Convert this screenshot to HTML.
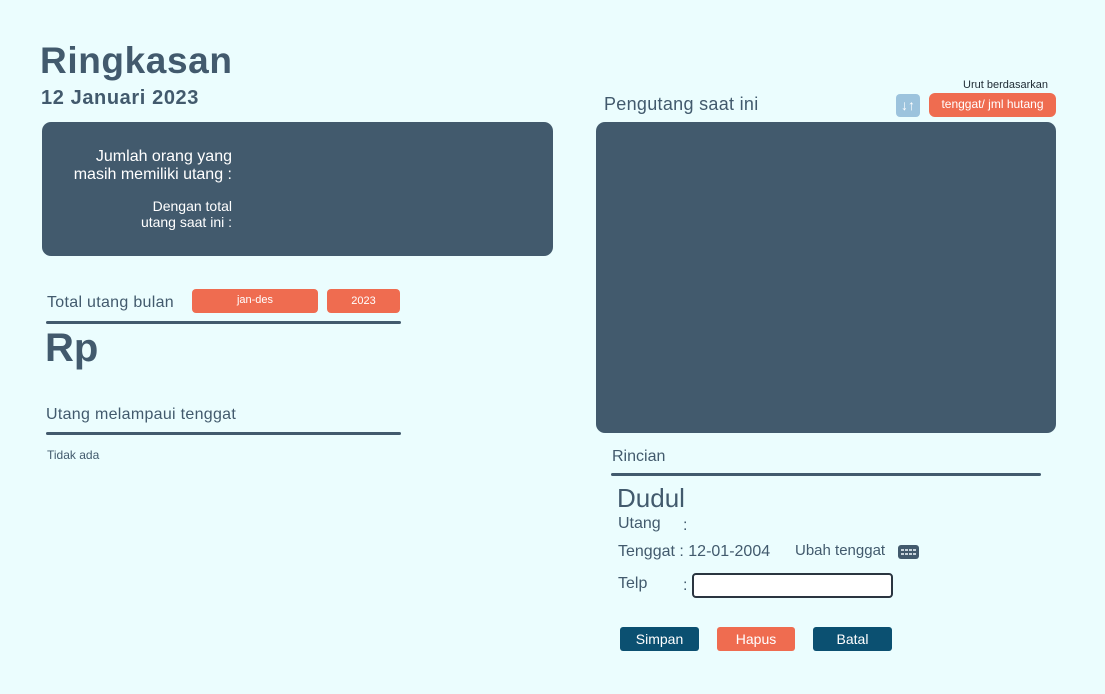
<!DOCTYPE html>
<html><head><meta charset="utf-8"><style>
*{margin:0;padding:0;box-sizing:border-box}
body{width:1105px;height:694px;background:#ebfdfe;font-family:"Liberation Sans",sans-serif;color:#425a6d;position:relative;overflow:hidden}
.a{position:absolute;white-space:nowrap}
.panel{position:absolute;background:#425a6d;border-radius:9px}
.btn{position:absolute;background:#ef6c50;color:#fff;border-radius:4px;font-size:11px;text-align:center}
.line{position:absolute;height:3px;background:#425a6d;border-radius:2px}
.db{position:absolute;background:#0b5071;color:#fff;border-radius:3px;font-size:14px;text-align:center;line-height:24px}
</style></head><body>
<div class="a" style="left:40px;top:40px;font-size:37px;font-weight:bold;letter-spacing:0.6px">Ringkasan</div>
<div class="a" style="left:41px;top:87px;font-size:20px;font-weight:bold;letter-spacing:0.6px">12 Januari 2023</div>
<div class="panel" style="left:42px;top:122px;width:511px;height:134px"></div>
<div class="a" style="left:60px;top:148px;width:172px;text-align:right;color:#fff;font-size:16px;line-height:18px">Jumlah orang yang<br>masih memiliki utang :</div>
<div class="a" style="left:60px;top:198px;width:172px;text-align:right;color:#fff;font-size:14px;line-height:16px">Dengan total<br>utang saat ini :</div>
<div class="a" style="left:47px;top:294px;font-size:16px;letter-spacing:0.3px">Total utang bulan</div>
<div class="btn" style="left:192px;top:289px;width:126px;height:24px;line-height:22px">jan-des</div>
<div class="btn" style="left:327px;top:289px;width:73px;height:24px;line-height:24px">2023</div>
<div class="line" style="left:46px;top:321px;width:355px"></div>
<div class="a" style="left:45px;top:326px;font-size:40px;font-weight:bold">Rp</div>
<div class="a" style="left:46px;top:406px;font-size:16px;letter-spacing:0.3px">Utang melampaui tenggat</div>
<div class="line" style="left:46px;top:432px;width:355px"></div>
<div class="a" style="left:47px;top:448px;font-size:12px">Tidak ada</div>

<div class="a" style="left:963px;top:79px;font-size:11px;color:#1e2a33">Urut berdasarkan</div>
<div class="a" style="left:604px;top:94px;font-size:18px;letter-spacing:0.3px">Pengutang saat ini</div>
<div class="a" style="left:896px;top:94px;width:24px;height:23px;background:#9cc3dd;border-radius:4px;color:#fff;font-size:14px;font-weight:bold;text-align:center;line-height:23px">↓↑</div>
<div class="btn" style="left:929px;top:93px;width:127px;height:24px;line-height:23px;border-radius:6px;font-size:12px">tenggat/ jml hutang</div>
<div class="panel" style="left:596px;top:122px;width:460px;height:311px"></div>
<div class="a" style="left:612px;top:448px;font-size:16px">Rincian</div>
<div class="line" style="left:611px;top:473px;width:430px"></div>
<div class="a" style="left:617px;top:483px;font-size:26px">Dudul</div>
<div class="a" style="left:618px;top:515px;font-size:16px">Utang</div>
<div class="a" style="left:683px;top:517px;font-size:16px">:</div>
<div class="a" style="left:618px;top:543px;font-size:16px">Tenggat : 12-01-2004</div>
<div class="a" style="left:795px;top:542px;font-size:15px">Ubah tenggat</div>
<div class="a" style="left:898px;top:545px;width:21px;height:14px;background:#425a6d;border-radius:3px"><svg width="21" height="14"><g fill="#c8d4dc"><rect x="3" y="4" width="3" height="2"/><rect x="7" y="4" width="3" height="2"/><rect x="11" y="4" width="3" height="2"/><rect x="15" y="4" width="3" height="2"/><rect x="3" y="8" width="3" height="2"/><rect x="7" y="8" width="3" height="2"/><rect x="11" y="8" width="3" height="2"/><rect x="15" y="8" width="3" height="2"/></g></svg></div>
<div class="a" style="left:618px;top:575px;font-size:16px">Telp</div>
<div class="a" style="left:683px;top:577px;font-size:16px">:</div>
<div class="a" style="left:692px;top:573px;width:201px;height:25px;background:#fff;border:2px solid #2a3540;border-radius:4px"></div>
<div class="db" style="left:620px;top:627px;width:79px;height:24px">Simpan</div>
<div class="db" style="left:717px;top:627px;width:78px;height:24px;background:#ef6c50">Hapus</div>
<div class="db" style="left:813px;top:627px;width:79px;height:24px">Batal</div>
</body></html>
